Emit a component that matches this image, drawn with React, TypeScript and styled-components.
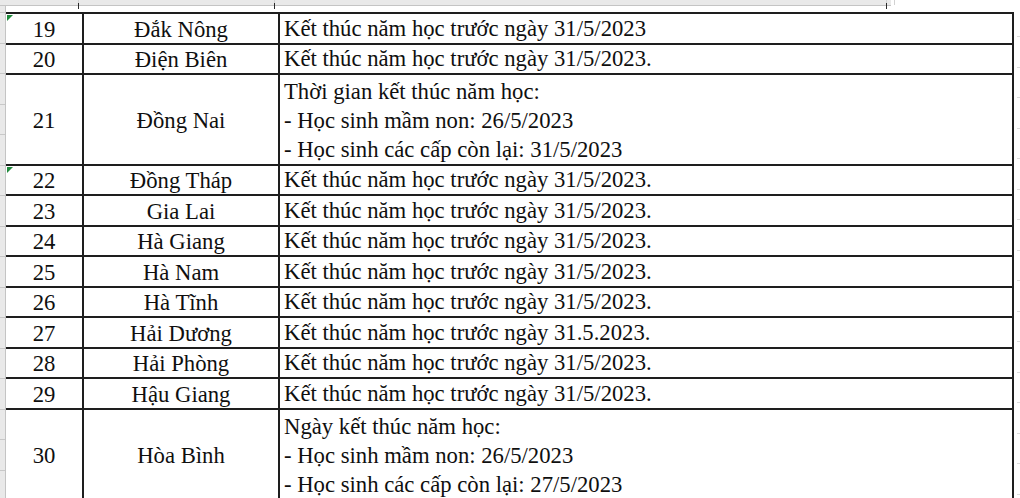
import React from 'react';
import styled, { createGlobalStyle } from 'styled-components';

const GlobalStyle = createGlobalStyle`
  html, body {
    margin: 0;
    padding: 0;
    background: #ffffff;
  }
`;

type Entry = {
  no: string;
  name: string;
  lines: string[];
  h: number;
  flag?: boolean;
};

const DONE = 'Kết thúc năm học trước ngày 31/5/2023.';

const rows: Entry[] = [
  { no: '19', name: 'Đắk Nông', lines: ['Kết thúc năm học trước ngày 31/5/2023'], h: 31, flag: true },
  { no: '20', name: 'Điện Biên', lines: [DONE], h: 30 },
  {
    no: '21',
    name: 'Đồng Nai',
    lines: ['Thời gian kết thúc năm học:', '- Học sinh mầm non: 26/5/2023', '- Học sinh các cấp còn lại: 31/5/2023'],
    h: 91,
  },
  { no: '22', name: 'Đồng Tháp', lines: [DONE], h: 30, flag: true },
  { no: '23', name: 'Gia Lai', lines: [DONE], h: 31 },
  { no: '24', name: 'Hà Giang', lines: [DONE], h: 30 },
  { no: '25', name: 'Hà Nam', lines: [DONE], h: 31 },
  { no: '26', name: 'Hà Tĩnh', lines: [DONE], h: 30 },
  { no: '27', name: 'Hải Dương', lines: ['Kết thúc năm học trước ngày 31.5.2023.'], h: 31 },
  { no: '28', name: 'Hải Phòng', lines: [DONE], h: 30 },
  { no: '29', name: 'Hậu Giang', lines: [DONE], h: 31 },
  {
    no: '30',
    name: 'Hòa Bình',
    lines: ['Ngày kết thúc năm học:', '- Học sinh mầm non: 26/5/2023', '- Học sinh các cấp còn lại: 27/5/2023'],
    h: 91,
  },
];

// column header strip (only its bottom edge is visible)
const headCols = [
  { w: 78, tick: true },
  { w: 195, tick: true },
  { w: 611, tick: true },
  { w: 7, tick: false },
];

const Page = styled.div`
  width: 1020px;
  height: 498px;
  overflow: hidden;
  display: flex;
  flex-direction: column;
  background: #ffffff;
  font-family: 'Liberation Serif', 'Times New Roman', serif;
  color: #0f0f0f;
`;

const HeadStrip = styled.div`
  display: flex;
  width: 891px;
  height: 5px;
  flex: none;
  background: #e9e9e9;
  border-bottom: 1px solid #c4c4c4;
`;

const HeadCell = styled.div<{ $w: number; $tick: boolean }>`
  position: relative;
  width: ${(p) => p.$w}px;
  flex: none;
  border-right: 1px solid #d2d2d2;

  &::after {
    content: '';
    display: ${(p) => (p.$tick ? 'block' : 'none')};
    position: absolute;
    right: -1px;
    top: 3px;
    width: 1px;
    height: 6px;
    background: #2a2a2a;
  }
`;

const Body = styled.div`
  flex: 1;
  display: flex;
  min-height: 0;
`;

const RowHeads = styled.div`
  width: 5px;
  flex: none;
  background-color: #e9e9e9;
  border-right: 1px solid #c4c4c4;
  background-image: repeating-linear-gradient(
    to bottom,
    transparent 0px,
    transparent 6px,
    #c8c8c8 6px,
    #c8c8c8 7px,
    transparent 7px,
    transparent 30.5px
  );
`;

const Sheet = styled.div`
  flex: 1;
  display: flex;
  padding-top: 6px;
  min-width: 0;
`;

const Table = styled.div`
  width: 1006px;
  flex: none;
  display: flex;
  flex-direction: column;
  border-top: 2px solid #1e1e1e;
  border-right: 2px solid #1e1e1e;
`;

const Gutter = styled.div`
  flex: 1;
  background-image: repeating-linear-gradient(
    to bottom,
    transparent 0px,
    transparent 24px,
    #dcdcdc 24px,
    #dcdcdc 25px,
    transparent 25px,
    transparent 30.5px
  );
  background-size: 5px 100%;
  background-position: 3px 0;
  background-repeat: repeat-y;
`;

const Row = styled.div<{ $h: number }>`
  display: grid;
  grid-template-columns: 78px 196px 1fr;
  height: ${(p) => p.$h}px;
  flex: none;
  border-bottom: 2px solid #1e1e1e;
  box-sizing: border-box;
`;

const Cell = styled.div<{ $center?: boolean }>`
  position: relative;
  display: flex;
  flex-direction: column;
  justify-content: ${(p) => (p.$center ? 'center' : 'flex-end')};
  align-items: ${(p) => (p.$center ? 'center' : 'flex-start')};
  padding: ${(p) => (p.$center ? '1px 0 0' : '0 0 0 4px')};
  font-size: 22.7px;
  line-height: 29px;
  white-space: nowrap;
  border-right: 2px solid #1e1e1e;
  overflow: hidden;

  &:last-child {
    border-right: none;
  }
`;

const Flag = styled.span`
  position: absolute;
  left: 1px;
  top: 1px;
  width: 0;
  height: 0;
  border-top: 6px solid #1f8a3c;
  border-right: 6px solid transparent;
`;

const Line = styled.span`
  display: block;
`;

export default function App() {
  return (
    <>
      <GlobalStyle />
      <Page>
        <HeadStrip>
          {headCols.map((c, i) => (
            <HeadCell key={i} $w={c.w} $tick={c.tick} />
          ))}
        </HeadStrip>
        <Body>
          <RowHeads />
          <Sheet>
            <Table>
              {rows.map((r) => (
                <Row key={r.no} $h={r.h}>
                  <Cell $center>
                    {r.flag && <Flag />}
                    {r.no}
                  </Cell>
                  <Cell $center>{r.name}</Cell>
                  <Cell>
                    {r.lines.map((l) => (
                      <Line key={l}>{l}</Line>
                    ))}
                  </Cell>
                </Row>
              ))}
            </Table>
            <Gutter />
          </Sheet>
        </Body>
      </Page>
    </>
  );
}
